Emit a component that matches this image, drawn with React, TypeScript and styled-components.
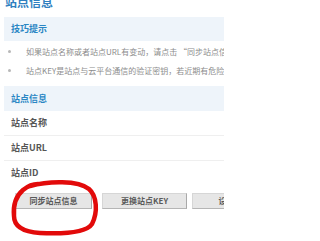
import React from "react";
import styled, { createGlobalStyle } from "styled-components";

const Global = createGlobalStyle`
  html, body { margin: 0; padding: 0; background: #fff; overflow: hidden; }
  body { font-family: "Noto Sans CJK SC", "Noto Sans", sans-serif; }
`;

const Page = styled.div`
  position: relative;
  width: 224px;
  height: 241px;
  overflow: hidden;
`;

const Inner = styled.div`
  width: 420px;
  padding-left: 4px;
`;

const Title = styled.h1`
  margin: -4px 0 0 1px;
  font-size: 12px;
  line-height: 12px;
  height: 12px;
  font-weight: bold;
  color: #2f7fbf;
`;

const SectionHead = styled.div<{ $h: number; $mt: number }>`
  margin-top: ${(p) => p.$mt}px;
  height: ${(p) => p.$h}px;
  line-height: ${(p) => p.$h}px;
  background: #eef4fa;
  padding-left: 7px;
  font-size: 9px;
  font-weight: bold;
  color: #2a86c4;
`;

const TipList = styled.ul`
  list-style: none;
  margin: 1px 0 0;
  padding: 0;
`;

const Tip = styled.li`
  display: flex;
  align-items: center;
  height: 19px;
  white-space: nowrap;
  font-size: 8px;
  color: #8c8c8c;
`;

const Dot = styled.span`
  width: 3px;
  height: 3px;
  border-radius: 50%;
  background: #b8b8b8;
  margin: 0 15px 0 4px;
  flex: none;
`;

const Row = styled.div<{ $last?: boolean }>`
  height: 24px;
  line-height: 24px;
  padding-left: 7px;
  border-bottom: 1px solid ${(p) => (p.$last ? "transparent" : "#efefef")};
  font-size: 9px;
  font-weight: bold;
  color: #555;
`;

const Buttons = styled.div`
  display: flex;
  margin: 7px 0 0 11px;
`;

const Button = styled.button<{ $w: number; $mr: number }>`
  width: ${(p) => p.$w}px;
  height: 16px;
  margin-right: ${(p) => p.$mr}px;
  padding: 0;
  flex: none;
  background: #e6e6e6;
  border: 1px solid #d6d6d6;
  border-right-color: #a9a9a9;
  border-bottom-color: #b5b5b5;
  font-family: "Noto Sans CJK SC", "Noto Sans", sans-serif;
  font-size: 8px;
  line-height: 14px;
  font-weight: bold;
  color: #5a5a5a;
  white-space: nowrap;
`;

const Mark = styled.svg`
  position: absolute;
  left: 0;
  top: 0;
  pointer-events: none;
`;

export default function App() {
  return (
    <>
      <Global />
      <Page>
        <Inner>
          <Title>站点信息</Title>
          <SectionHead $h={24} $mt={9}>技巧提示</SectionHead>
          <TipList>
            <Tip>
              <Dot />
              如果站点名称或者站点URL有变动，请点击 “同步站点信息”按钮
            </Tip>
            <Tip>
              <Dot />
              站点KEY是站点与云平台通信的验证密钥，若近期有危险操作，请点击“更换站点KEY”按钮
            </Tip>
          </TipList>
          <SectionHead $h={25} $mt={6}>站点信息</SectionHead>
          <Row>站点名称</Row>
          <Row>站点URL</Row>
          <Row $last>站点ID</Row>
          <Buttons>
            <Button $w={77} $mr={10}>同步站点信息</Button>
            <Button $w={85} $mr={5}>更换站点KEY</Button>
            <Button $w={85} $mr={5}>设置站点</Button>
          </Buttons>
        </Inner>
        <Mark width="224" height="241" viewBox="0 0 224 241">
          <path
            d="M 30 186 C 48 181, 78 180, 89 189 C 97 196, 98 212, 92 224 C 86 233, 62 234, 40 233 C 25 232, 14 228, 14 216 C 13 205, 16 196, 23 190 C 28 186, 33 184, 38 184"
            fill="none"
            stroke="#e20a0a"
            strokeWidth="4.5"
            strokeLinecap="round"
            strokeLinejoin="round"
          />
        </Mark>
      </Page>
    </>
  );
}
